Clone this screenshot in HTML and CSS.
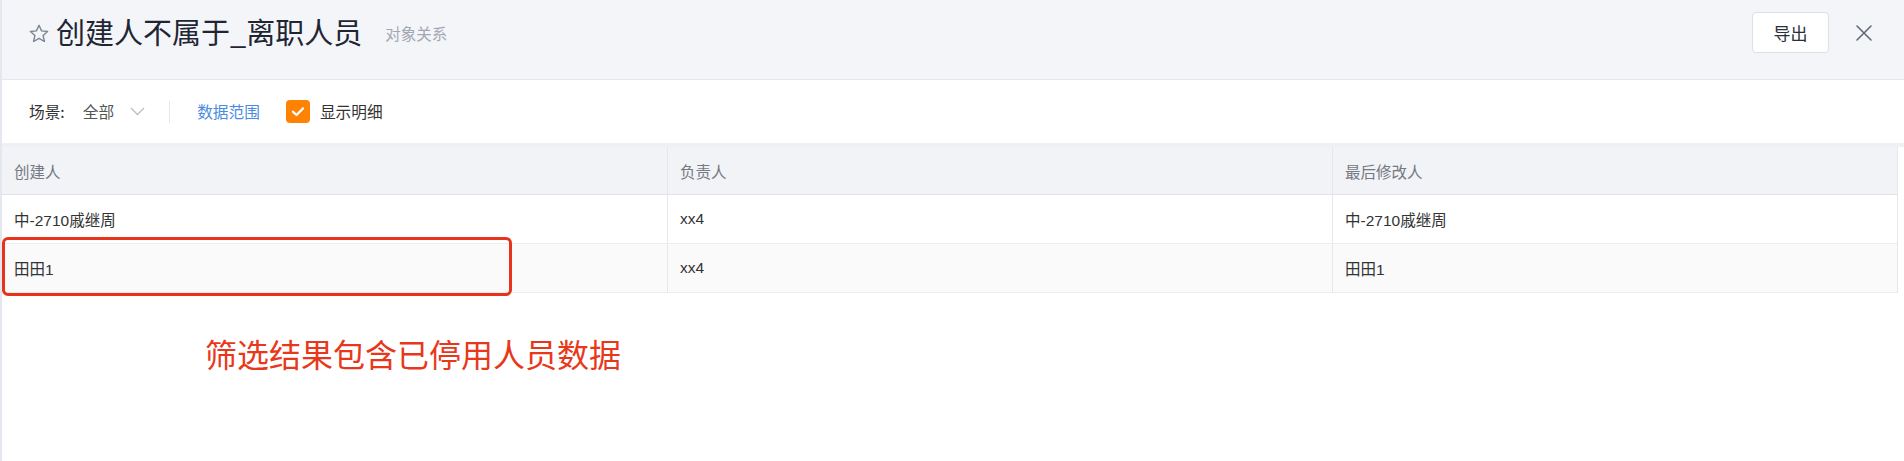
FILE: index.html
```html
<!DOCTYPE html>
<html lang="zh">
<head>
<meta charset="utf-8">
<title>创建人不属于_离职人员</title>
<link rel="stylesheet" href="styles.css">
</head>
<body>
<div class="page">
  <header class="header">
    <div class="title-group">
      <svg class="star" width="20" height="19" viewBox="0 0 20 19"><path d="M10 1.3 L12.6 6.9 L18.6 7.5 L14.1 11.5 L15.4 17.5 L10 14.4 L4.6 17.5 L5.9 11.5 L1.4 7.5 L7.4 6.9 Z" fill="none" stroke="#7c8594" stroke-width="1.4" stroke-linejoin="round"/></svg>
      <h1 class="title">创建人不属于_离职人员</h1>
      <span class="subtitle">对象关系</span>
    </div>
    <div class="actions">
      <button class="btn">导出</button>
      <svg class="close" width="16" height="16" viewBox="0 0 16 16"><path d="M1 1 L15 15 M15 1 L1 15" stroke="#5f6673" stroke-width="1.5" stroke-linecap="round"/></svg>
    </div>
  </header>
  <div class="toolbar">
    <span class="label">场景:</span>
    <span class="scene">全部</span>
    <svg class="chev" width="15" height="9" viewBox="0 0 15 9"><path d="M1 1 L7.5 7.5 L14 1" fill="none" stroke="#b9bdc5" stroke-width="1.3"/></svg>
    <span class="sep"></span>
    <span class="link">数据范围</span>
    <span class="checkbox"><svg width="24" height="23" viewBox="0 0 24 23"><path d="M7 11.8 L10.6 15 L17 8.4" fill="none" stroke="#fff" stroke-width="2.3" stroke-linecap="round" stroke-linejoin="round"/></svg></span>
    <span class="check-label">显示明细</span>
  </div>
  <div class="band"></div>
  <div class="table-wrap">
    <div class="table">
      <div class="row head">
        <div class="cell">创建人</div>
        <div class="cell">负责人</div>
        <div class="cell">最后修改人</div>
      </div>
      <div class="row">
        <div class="cell">中-2710戚继周</div>
        <div class="cell">xx4</div>
        <div class="cell">中-2710戚继周</div>
      </div>
      <div class="row alt">
        <div class="cell">田田1</div>
        <div class="cell">xx4</div>
        <div class="cell">田田1</div>
      </div>
    </div>
    <div class="mark"></div>
  </div>
  <p class="note">筛选结果包含已停用人员数据</p>
</div>
</body>
</html>
```
FILE: styles.css
```css
* { box-sizing: border-box; }
html, body { margin: 0; padding: 0; background: #fff; }
body {
  font-family: "Liberation Sans", "Noto Sans CJK SC", sans-serif;
  color: #333;
}
.page {
  border-left: 2px solid #e4e7ed;
  min-height: 461px;
  width: 1904px;
}
.header {
  height: 80px;
  background: #f4f5f9;
  border-bottom: 1px solid #e6e8ee;
  display: flex;
  justify-content: space-between;
  align-items: flex-start;
  padding: 12px 32px 0 27px;
}
.title-group {
  display: flex;
  align-items: center;
  height: 41px;
}
.star { display: block; margin-right: 7px; margin-top: 1px; }
.title {
  margin: 0;
  font-size: 29px;
  font-weight: 400;
  color: #1f2633;
  line-height: 41px;
  font-family: "Noto Sans CJK SC", sans-serif;
  margin-top: -3px;
}
.subtitle {
  margin-left: 23px;
  font-size: 15.5px;
  color: #a2a8b3;
  font-family: "Noto Sans CJK SC", sans-serif;
}
.actions {
  display: flex;
  align-items: center;
  height: 41px;
}
.btn {
  width: 77px;
  height: 41px;
  background: #fff;
  border: 1px solid #dcdfe6;
  border-radius: 4px;
  font-family: "Noto Sans CJK SC", sans-serif;
  font-size: 17px;
  color: #2b2f36;
  padding: 0;
  margin-right: 27px;
}
.close { display: block; }
.toolbar {
  height: 63px;
  display: flex;
  align-items: center;
  padding-left: 27px;
  font-size: 15.7px;
  font-family: "Noto Sans CJK SC", sans-serif;
}
.label { color: #333; }
.scene { color: #555; margin-left: 18px; }
.chev { margin-left: 16px; }
.sep {
  width: 1px;
  height: 22px;
  background: #e4e7ed;
  margin-left: 24px;
}
.link { color: #4a8be2; margin-left: 27px; }
.checkbox {
  width: 24px;
  height: 23px;
  border-radius: 4px;
  background: #ff8200;
  margin-left: 26px;
  display: flex;
}
.check-label { margin-left: 10px; color: #333; }
.band { height: 4px; background: #eef0f3; }
.table-wrap { position: relative; }
.table {
  width: 1896px;
  border-right: 1px solid #e6e8ee;
}
.row {
  display: grid;
  grid-template-columns: 665px 665px 565px;
  height: 49px;
  border-bottom: 1px solid #eaecf0;
  font-size: 15.5px;
  color: #333;
}
.row.head {
  height: 48px;
  background: #f2f3f6;
  border-bottom: 1px solid #dfe2e8;
  color: #747a85;
}
.row.alt { background: #fafafa; }
.cell {
  display: flex;
  align-items: center;
  padding-left: 12px;
}
.cell + .cell { border-left: 1px solid #e4e7ed; }
.mark {
  position: absolute;
  left: 0;
  top: 90px;
  width: 510px;
  height: 59px;
  border: 3px solid #e8331c;
  border-radius: 6px;
}
.note {
  margin: 39px 0 0 203px;
  font-size: 32px;
  line-height: 42px;
  color: #e8381c;
  font-family: "Noto Sans CJK SC", sans-serif;
}
```
